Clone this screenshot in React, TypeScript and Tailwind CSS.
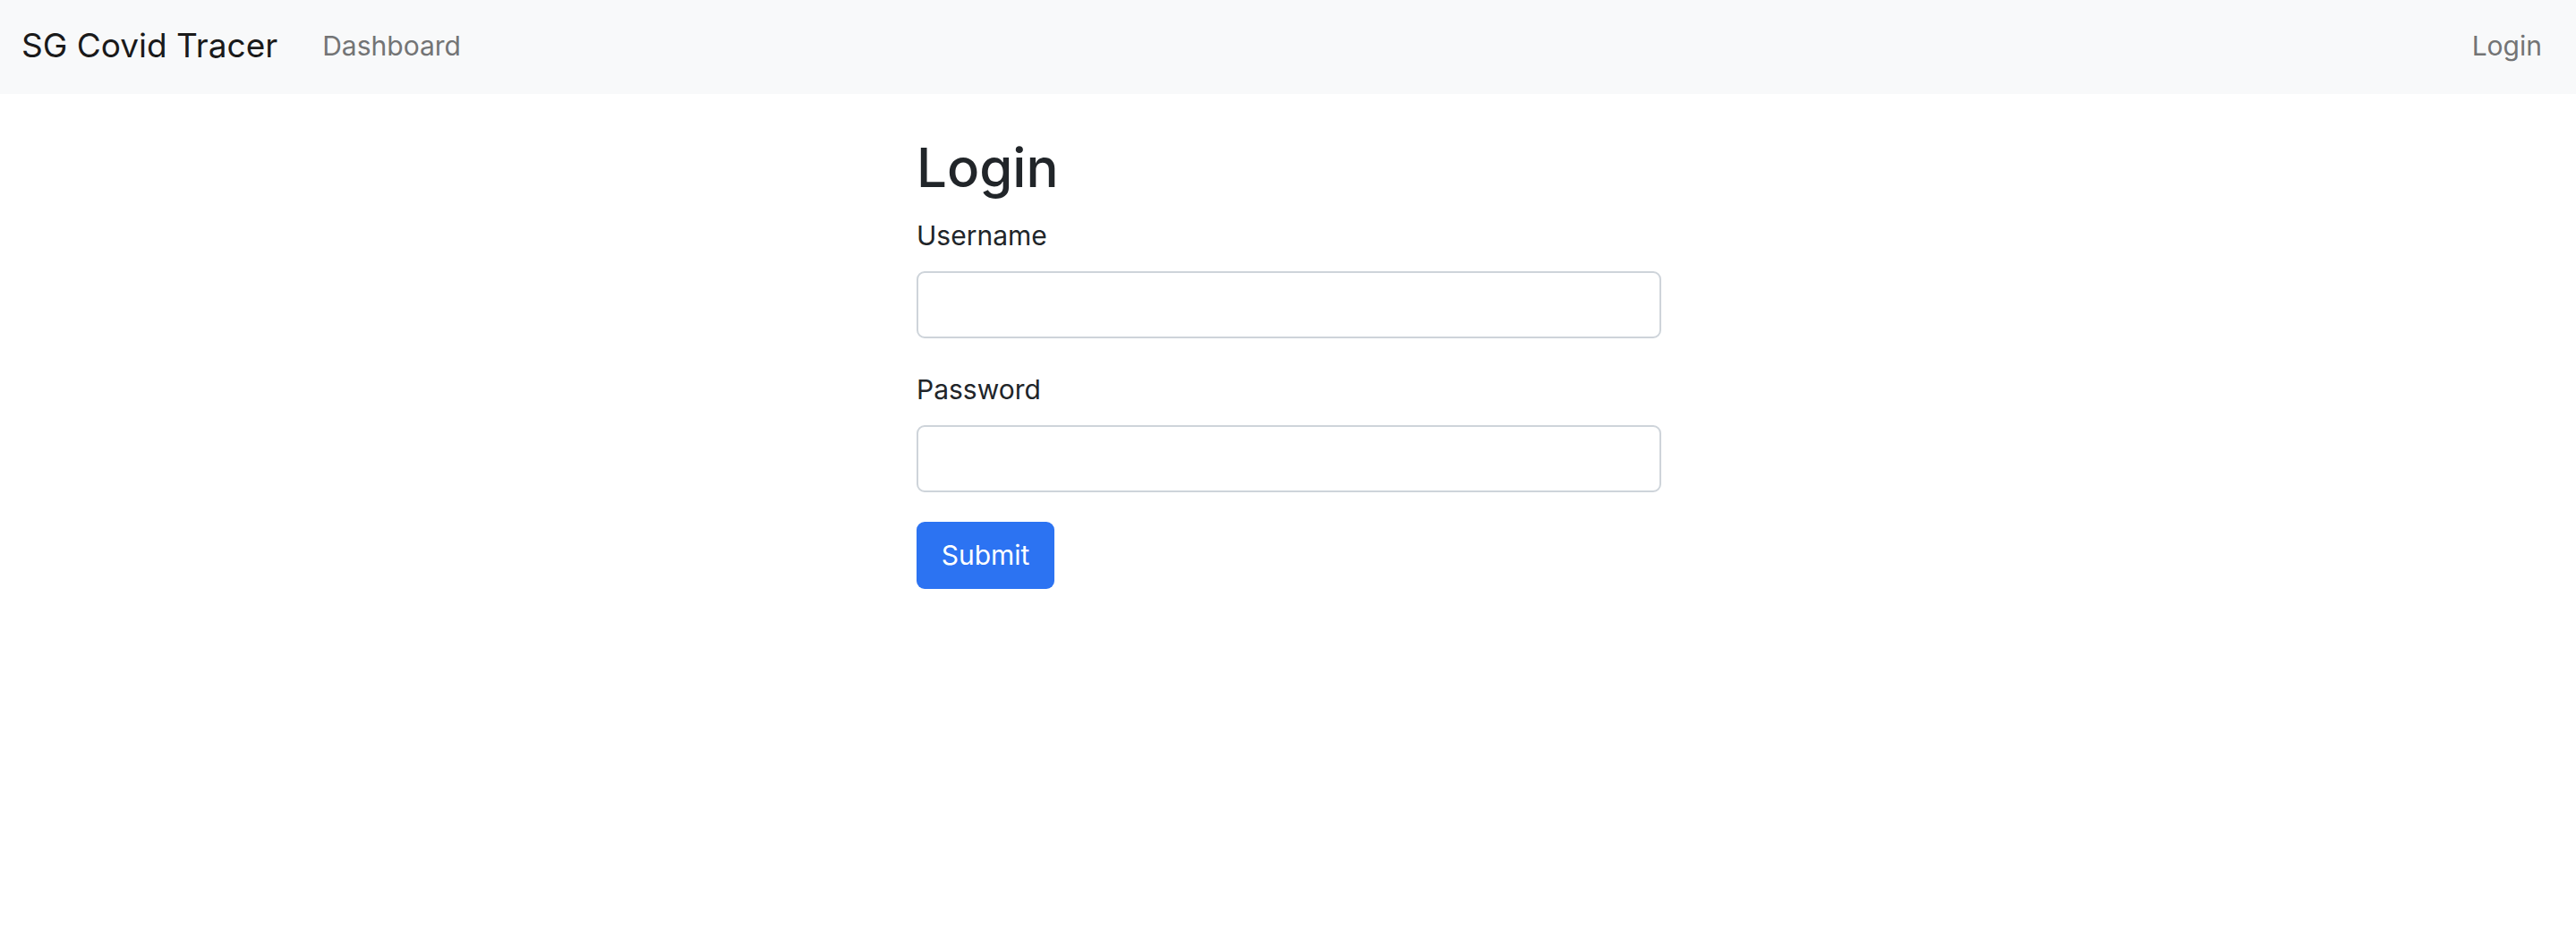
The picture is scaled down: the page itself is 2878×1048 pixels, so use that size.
import React from 'react';

const font = { fontFamily: 'Inter, "Noto Sans", sans-serif' };

const Navbar = () => (
  <nav className="flex h-[105px] items-center justify-between bg-[#f8f9fa] pb-[3px] pl-[24px] pr-[38px]">
    <div className="flex items-center">
      <a href="#" className="text-[37px] text-[#1a1a1a] no-underline">
        SG Covid Tracer
      </a>
      <a href="#" className="ml-[50px] text-[30px] text-[#737475]">
        Dashboard
      </a>
    </div>
    <a href="#" className="text-[30px] text-[#737475]">
      Login
    </a>
  </nav>
);

const Field = ({ label, type, last }: { label: string; type: string; last?: boolean }) => (
  <div className={last ? 'mb-[33px]' : 'mb-[35px]'}>
    <label className="mb-[17px] block text-[30px] leading-[45px] text-[#212529]">{label}</label>
    <input
      type={type}
      className="block h-[75px] w-full rounded-[9px] border-2 border-[#ced4da] bg-white px-[22px] text-[30px] outline-none"
    />
  </div>
);

export default function App() {
  return (
    <div className="min-h-[1048px] bg-white" style={font}>
      <Navbar />
      <main className="ml-[1024px] w-[832px] pt-[45px]">
        <h1 className="text-[60px] font-medium leading-[74px] text-[#212529]">Login</h1>
        <form className="mt-[17px]" onSubmit={(e) => e.preventDefault()}>
          <Field label="Username" type="text" />
          <Field label="Password" type="password" last />
          <button
            type="submit"
            className="h-[75px] w-[154px] rounded-[9px] bg-[#2c73f2] text-[30px] text-white"
          >
            Submit
          </button>
        </form>
      </main>
    </div>
  );
}
